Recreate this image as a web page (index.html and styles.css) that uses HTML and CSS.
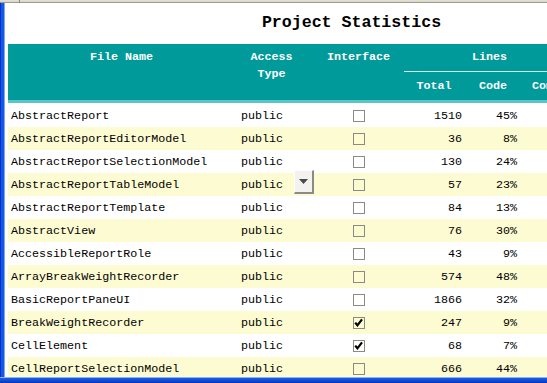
FILE: index.html
```html
<!DOCTYPE html>
<html>
<head>
<meta charset="utf-8">
<link rel="stylesheet" href="styles.css">
</head>
<body>
<div class="window">
  <div class="topbar"><span class="topsep"></span></div>
  <div class="middle">
    <div class="leftedge"></div>
    <div class="content">
      <div class="report">
        <div class="title">Project Statistics</div>
        <div class="thead">
          <div class="h h-name">File Name</div>
          <div class="h h-access">Access<br>Type</div>
          <div class="h h-iface">Interface</div>
          <div class="h h-lines">Lines</div>
          <div class="h h-sub h-total">Total</div>
          <div class="h h-sub h-code">Code</div>
          <div class="h h-sub h-comm">Comm.</div>
          <div class="h h-sub h-rest"></div>
        </div>
        <div class="tbody">
          <div class="row"><div class="c name">AbstractReport</div><div class="c acc">public</div><div class="c ifc"><span class="cb"></span></div><div class="c num tot">1510</div><div class="c num cod">45%</div><div class="c"></div><div class="c"></div></div>
          <div class="row alt"><div class="c name">AbstractReportEditorModel</div><div class="c acc">public</div><div class="c ifc"><span class="cb"></span></div><div class="c num tot">36</div><div class="c num cod">8%</div><div class="c"></div><div class="c"></div></div>
          <div class="row"><div class="c name">AbstractReportSelectionModel</div><div class="c acc">public</div><div class="c ifc"><span class="cb"></span></div><div class="c num tot">130</div><div class="c num cod">24%</div><div class="c"></div><div class="c"></div></div>
          <div class="row alt"><div class="c name">AbstractReportTableModel</div><div class="c acc">public<span class="combo"><svg width="9" height="5" viewBox="0 0 9 5"><path d="M0 0H9L4.5 5Z" fill="#4a4a4a"/></svg></span></div><div class="c ifc"><span class="cb"></span></div><div class="c num tot">57</div><div class="c num cod">23%</div><div class="c"></div><div class="c"></div></div>
          <div class="row"><div class="c name">AbstractReportTemplate</div><div class="c acc">public</div><div class="c ifc"><span class="cb"></span></div><div class="c num tot">84</div><div class="c num cod">13%</div><div class="c"></div><div class="c"></div></div>
          <div class="row alt"><div class="c name">AbstractView</div><div class="c acc">public</div><div class="c ifc"><span class="cb"></span></div><div class="c num tot">76</div><div class="c num cod">30%</div><div class="c"></div><div class="c"></div></div>
          <div class="row"><div class="c name">AccessibleReportRole</div><div class="c acc">public</div><div class="c ifc"><span class="cb"></span></div><div class="c num tot">43</div><div class="c num cod">9%</div><div class="c"></div><div class="c"></div></div>
          <div class="row alt"><div class="c name">ArrayBreakWeightRecorder</div><div class="c acc">public</div><div class="c ifc"><span class="cb"></span></div><div class="c num tot">574</div><div class="c num cod">48%</div><div class="c"></div><div class="c"></div></div>
          <div class="row"><div class="c name">BasicReportPaneUI</div><div class="c acc">public</div><div class="c ifc"><span class="cb"></span></div><div class="c num tot">1866</div><div class="c num cod">32%</div><div class="c"></div><div class="c"></div></div>
          <div class="row alt"><div class="c name">BreakWeightRecorder</div><div class="c acc">public</div><div class="c ifc"><span class="cb on"><svg width="9" height="9" viewBox="0 0 9 9"><path d="M1.2 4.6L3.4 7.3L8 1.3" fill="none" stroke="#000" stroke-width="2.2"/></svg></span></div><div class="c num tot">247</div><div class="c num cod">9%</div><div class="c"></div><div class="c"></div></div>
          <div class="row"><div class="c name">CellElement</div><div class="c acc">public</div><div class="c ifc"><span class="cb on"><svg width="9" height="9" viewBox="0 0 9 9"><path d="M1.2 4.6L3.4 7.3L8 1.3" fill="none" stroke="#000" stroke-width="2.2"/></svg></span></div><div class="c num tot">68</div><div class="c num cod">7%</div><div class="c"></div><div class="c"></div></div>
          <div class="row alt"><div class="c name">CellReportSelectionModel</div><div class="c acc">public</div><div class="c ifc"><span class="cb"></span></div><div class="c num tot">666</div><div class="c num cod">44%</div><div class="c"></div><div class="c"></div></div>
        </div>
      </div>
    </div>
  </div>
  <div class="bottombar"></div>
</div>
</body>
</html>
```
FILE: styles.css
```css
* { box-sizing: border-box; }
html, body { margin: 0; padding: 0; background: #fff; }
body { font-family: "Liberation Mono", "Courier New", monospace; }

.window {
  width: 547px;
  height: 383px;
  overflow: hidden;
  display: flex;
  flex-direction: column;
}
.topbar {
  height: 3px;
  flex: none;
  background: linear-gradient(#e4e2d8 0, #d6d3c6 2px, #9f9c90 2px, #9f9c90 3px);
  padding-left: 19px;
}
.topsep { display: block; width: 1px; height: 3px; background: #8a877c; }
.middle {
  flex: 1;
  display: flex;
  min-height: 0;
}
.leftedge {
  width: 5px;
  flex: none;
  background: linear-gradient(90deg, #0a2ec8 0, #0a2ec8 1px, #1458e8 1px, #1458e8 4px, #7fa6f0 4px);
}
.content {
  flex: 1;
  padding-left: 3px;
  overflow: hidden;
}
.report { width: 687px; }

.title {
  height: 41px;
  padding-top: 10px;
  line-height: 20px;
  text-align: center;
  font-size: 16.6px;
  font-weight: bold;
  color: #000;
}

.thead {
  display: grid;
  grid-template-columns: 230px 72px 94px 60px 57px 57px 117px;
  grid-template-rows: 28px 28px;
  background: #009a9a;
  border-bottom: 3px solid #5cc4c4;
  height: 59px;
  color: #fff;
  font-weight: bold;
  font-size: 11.7px;
  line-height: 17px;
}
.h { text-align: center; padding-top: 5px; }
.h-name { grid-column: 1; grid-row: 1 / 3; padding-right: 3px; }
.h-access { grid-column: 2; grid-row: 1 / 3; padding-right: 5px; }
.h-iface { grid-column: 3; grid-row: 1 / 3; padding-left: 3px; }
.h-lines { grid-column: 4 / 8; grid-row: 1; border-bottom: 1px solid #d2eeee; text-align: left; padding-left: 68px; }
.h-sub { grid-row: 2; padding-top: 6px; }
.h-total { grid-column: 4; }
.h-code { grid-column: 5; padding-left: 1px; }
.h-comm { grid-column: 6; }
.h-rest { grid-column: 7; }

.tbody { padding-top: 1px; }
.row {
  display: grid;
  grid-template-columns: 230px 72px 94px 60px 57px 57px 117px;
  height: 23px;
  align-items: center;
  font-size: 11.7px;
  color: #000;
  background: #fff;
}
.row.alt { background: #fdfbd2; }
.c { white-space: nowrap; }
.name { padding-left: 3px; }
.acc { padding-left: 3px; position: relative; }
.ifc { padding-left: 3px; display: flex; justify-content: center; }
.num { text-align: right; }
.tot { padding-right: 2px; }
.cod { padding-right: 4px; }

.cb {
  width: 12px;
  height: 12px;
  border: 1px solid #8b8b83;
  display: flex;
  align-items: center;
  justify-content: center;
}

.combo {
  position: absolute;
  left: 56px;
  top: -8px;
  width: 20px;
  height: 24px;
  background: #f3f2ee;
  border-top: 1px solid #fdfdfd;
  border-left: 1px solid #fdfdfd;
  border-right: 2px solid #8a8a8a;
  border-bottom: 2px solid #8a8a8a;
  display: flex;
  align-items: center;
  justify-content: center;
}

.bottombar {
  height: 6px;
  flex: none;
  background: linear-gradient(#8fb2f2 0, #8fb2f2 1px, #1a5ee6 1px, #0c4ad6 4px, #0a32b8 6px);
}
```
